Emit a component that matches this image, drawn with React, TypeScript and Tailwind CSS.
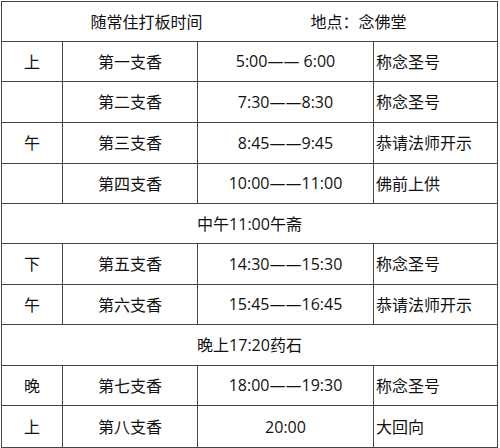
import React from 'react';

type Row =
  | { kind: 'full'; text: string }
  | { kind: 'item'; side: string; name: string; time: string; note: string };

const ROWS: Row[] = [
  { kind: 'item', side: '上', name: '第一支香', time: '5:00—— 6:00', note: '称念圣号' },
  { kind: 'item', side: '', name: '第二支香', time: '7:30——8:30', note: '称念圣号' },
  { kind: 'item', side: '午', name: '第三支香', time: '8:45——9:45', note: '恭请法师开示' },
  { kind: 'item', side: '', name: '第四支香', time: '10:00——11:00', note: '佛前上供' },
  { kind: 'full', text: '中午11:00午斋' },
  { kind: 'item', side: '下', name: '第五支香', time: '14:30——15:30', note: '称念圣号' },
  { kind: 'item', side: '午', name: '第六支香', time: '15:45——16:45', note: '恭请法师开示' },
  { kind: 'full', text: '晚上17:20药石' },
  { kind: 'item', side: '晚', name: '第七支香', time: '18:00——19:30', note: '称念圣号' },
  { kind: 'item', side: '上', name: '第八支香', time: '20:00', note: '大回向' },
];

const cell = 'bg-white flex items-center';

// render the double dash in a font with a wide em dash
const Time = ({ value }: { value: string }) => {
  const parts = value.split('——');
  if (parts.length < 2) return <span>{value}</span>;
  return (
    <span className="whitespace-pre">
      {parts[0]}
      <span style={{ fontFamily: '"DejaVu Sans", sans-serif' }}>——</span>
      {parts[1]}
    </span>
  );
};

export default function App() {
  return (
    <div
      className="w-[500px] h-[448px] bg-white pt-px pl-px text-[16px] text-[#111]"
      style={{ fontFamily: '"Open Sans", "Noto Sans CJK SC", sans-serif' }}
    >
      <div className="w-[497px] grid grid-cols-[60px_134px_175px_123px] grid-rows-[39px_39px_40px_40px_39px_39px_40px_39px_40px_39px_41px] gap-px p-px bg-[#444] leading-none">
        <div className={`${cell} col-span-4 justify-center gap-[108px] pr-[2px]`}>
          <span>随常住打板时间</span>
          <span>地点：念佛堂</span>
        </div>
        {ROWS.map((r, i) =>
          r.kind === 'full' ? (
            <div key={i} className={`${cell} col-span-4 justify-center`}>
              {r.text}
            </div>
          ) : (
            <React.Fragment key={i}>
              <div className={`${cell} justify-center`}>{r.side}</div>
              <div className={`${cell} justify-center`}>{r.name}</div>
              <div className={`${cell} justify-center`}>
                <Time value={r.time} />
              </div>
              <div className={`${cell} justify-start pl-[2px]`}>{r.note}</div>
            </React.Fragment>
          )
        )}
      </div>
    </div>
  );
}
